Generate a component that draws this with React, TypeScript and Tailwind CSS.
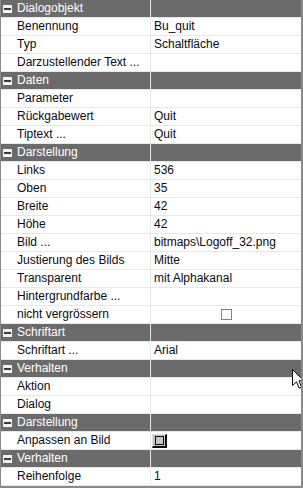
import React from "react";

type Row =
  | { kind: "h"; label: string }
  | { kind: "r"; label: string; value?: string; extra?: "check" | "button" };

const rows: Row[] = [
  { kind: "h", label: "Dialogobjekt" },
  { kind: "r", label: "Benennung", value: "Bu_quit" },
  { kind: "r", label: "Typ", value: "Schaltfläche" },
  { kind: "r", label: "Darzustellender Text ..." },
  { kind: "h", label: "Daten" },
  { kind: "r", label: "Parameter" },
  { kind: "r", label: "Rückgabewert", value: "Quit" },
  { kind: "r", label: "Tiptext ...", value: "Quit" },
  { kind: "h", label: "Darstellung" },
  { kind: "r", label: "Links", value: "536" },
  { kind: "r", label: "Oben", value: "35" },
  { kind: "r", label: "Breite", value: "42" },
  { kind: "r", label: "Höhe", value: "42" },
  { kind: "r", label: "Bild ...", value: "bitmaps\\Logoff_32.png" },
  { kind: "r", label: "Justierung des Bilds", value: "Mitte" },
  { kind: "r", label: "Transparent", value: "mit Alphakanal" },
  { kind: "r", label: "Hintergrundfarbe ..." },
  { kind: "r", label: "nicht vergrössern", extra: "check" },
  { kind: "h", label: "Schriftart" },
  { kind: "r", label: "Schriftart ...", value: "Arial" },
  { kind: "h", label: "Verhalten" },
  { kind: "r", label: "Aktion" },
  { kind: "r", label: "Dialog" },
  { kind: "h", label: "Darstellung" },
  { kind: "r", label: "Anpassen an Bild", extra: "button" },
  { kind: "h", label: "Verhalten" },
  { kind: "r", label: "Reihenfolge", value: "1" },
];

function Header({ label }: { label: string }) {
  return (
    <div className="flex h-[18px] border-b border-[#e8e8e8] bg-[#6b6b6b] text-white">
      <div className="relative flex w-[149px] items-center">
        <div className="absolute left-[2px] top-[5px] flex h-[8px] w-[9px] items-center justify-center bg-[#f2f2f2]">
          <div className="h-[2px] w-[7px] bg-[#3a3a3a]" />
        </div>
        <span className="pl-[16px] leading-[17px]">{label}</span>
      </div>
      <div className="w-px bg-[#e8e8e8]" />
      <div className="flex-1" />
    </div>
  );
}

function DataRow({ label, value, extra }: { label: string; value?: string; extra?: "check" | "button" }) {
  return (
    <div className="flex h-[18px] border-b border-[#e8e8e8] bg-white text-[#0a0a14]">
      <div className="flex w-[149px] items-center">
        <span className="whitespace-nowrap pl-[16px] leading-[17px]">{label}</span>
      </div>
      <div className="w-px bg-[#e8e8e8]" />
      <div className="flex flex-1 items-center">
        {value && <span className="whitespace-nowrap pl-[3px] leading-[17px]">{value}</span>}
        {extra === "check" && (
          <div className="flex flex-1 justify-center">
            <div className="h-[11px] w-[11px] border border-[#808080] bg-white" />
          </div>
        )}
        {extra === "button" && (
          <div className="ml-[1px] flex h-[14px] w-[15px] items-center justify-center border-b-2 border-r-2 border-t border-l border-b-[#101010] border-r-[#101010] border-t-[#e0e0e0] border-l-[#e0e0e0] bg-[#c4c4c4]">
            <div className="h-[9px] w-[9px] border border-[#101010] bg-[#c8c8c8]" />
          </div>
        )}
      </div>
    </div>
  );
}

export default function App() {
  return (
    <div
      className="relative h-[488px] w-[303px] overflow-hidden border-b-2 border-l border-r-2 border-[#8a8a8a] bg-white text-[12px]"
      style={{ fontFamily: '"Liberation Sans", Arial, sans-serif' }}
    >
      {rows.map((r, i) =>
        r.kind === "h" ? (
          <Header key={i} label={r.label} />
        ) : (
          <DataRow key={i} label={r.label} value={r.value} extra={r.extra} />
        )
      )}
      <svg
        className="absolute left-[291px] top-[369px]"
        width="13"
        height="21"
        viewBox="0 0 13 21"
      >
        <path
          d="M0.5 0.5 L0.5 16.5 L4.5 12.8 L7.2 19.2 L9.6 18.2 L7 11.8 L12 11.8 Z"
          fill="#ffffff"
          stroke="#000000"
          strokeWidth="1"
        />
      </svg>
    </div>
  );
}
